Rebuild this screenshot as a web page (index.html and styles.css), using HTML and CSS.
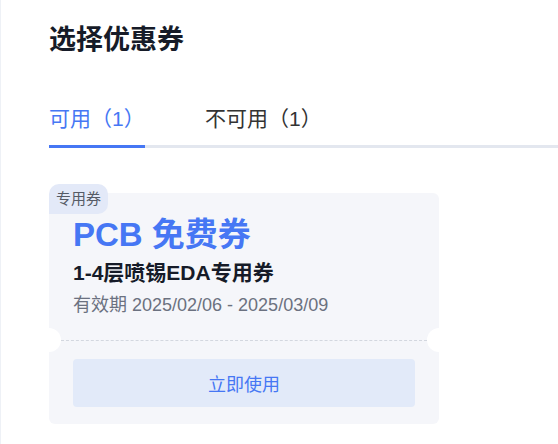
FILE: index.html
```html
<!DOCTYPE html>
<html lang="zh">
<head>
<meta charset="utf-8">
<link rel="stylesheet" href="styles.css">
</head>
<body>
<div class="panel">
  <h1 class="title">选择优惠券</h1>
  <div class="tabs">
    <div class="tab active">可用（1）</div>
    <div class="tab">不可用（1）</div>
  </div>
  <div class="list">
    <div class="coupon">
      <span class="badge">专用券</span>
      <div class="coupon-top">
        <div class="coupon-name">PCB 免费券</div>
        <div class="coupon-desc">1-4层喷锡EDA专用券</div>
        <div class="coupon-date">有效期 2025/02/06 - 2025/03/09</div>
      </div>
      <div class="divider"></div>
      <div class="coupon-bottom">
        <button class="use-btn">立即使用</button>
      </div>
    </div>
  </div>
</div>
</body>
</html>
```
FILE: styles.css
```css
html, body {
  margin: 0;
  padding: 0;
  background: #ffffff;
  font-family: "Liberation Sans", "Noto Sans CJK SC", sans-serif;
}
.panel {
  height: 444px;
  box-sizing: border-box;
  border-left: 1px solid #eef1f6;
  padding: 22px 0 0 48px;
}
.title {
  margin: 0;
  font-size: 27px;
  line-height: 36px;
  font-weight: 700;
  color: #161b28;
}
.tabs {
  display: flex;
  margin-top: 48px;
  border-bottom: 3px solid #e3e7ef;
}
.tab {
  font-size: 21px;
  line-height: 26px;
  padding-bottom: 13px;
  color: #333333;
  margin-bottom: -3px;
  border-bottom: 3px solid transparent;
}
.tab.active {
  width: 96px;
  color: #4677f4;
  border-bottom-color: #4677f4;
  margin-right: 60px;
}
.list {
  padding-top: 45px;
}
.coupon {
  position: relative;
  width: 390px;
  background: #f5f6fa;
  border-radius: 6px;
}
.badge {
  position: absolute;
  left: 0;
  top: -9px;
  height: 30px;
  line-height: 30px;
  padding: 0 7px;
  font-size: 15px;
  color: #555b66;
  background: #e3e9f8;
  border-radius: 10px 10px 10px 0;
}
.coupon-top {
  padding: 22px 24px 23px;
}
.coupon-name {
  font-size: 33px;
  line-height: 40px;
  font-weight: 700;
  color: #4677f4;
}
.coupon-desc {
  margin-top: 4px;
  font-size: 21px;
  line-height: 28px;
  font-weight: 700;
  color: #161b28;
}
.coupon-date {
  margin-top: 6px;
  font-size: 18px;
  line-height: 24px;
  color: #6b7180;
}
.divider {
  position: relative;
  height: 0;
  margin: 0 12px;
  border-top: 1px dashed #d3d7df;
}
.divider::before,
.divider::after {
  content: "";
  position: absolute;
  top: -13px;
  width: 24px;
  height: 24px;
  border-radius: 50%;
  background: #ffffff;
}
.divider::before { left: -24px; }
.divider::after { right: -24px; }
.coupon-bottom {
  padding: 18px 24px 17px;
}
.use-btn {
  display: block;
  width: 100%;
  height: 48px;
  border: 0;
  border-radius: 4px;
  background: #e2eaf9;
  color: #4677f4;
  font-family: "Liberation Sans", "Noto Sans CJK SC", sans-serif;
  font-size: 18px;
}
```
